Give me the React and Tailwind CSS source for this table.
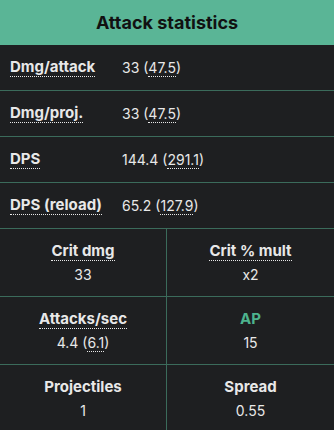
const rows = [
  { label: 'Dmg/attack', base: '33', boosted: '47.5' },
  { label: 'Dmg/proj.', base: '33', boosted: '47.5' },
  { label: 'DPS', base: '144.4', boosted: '291.1' },
  { label: 'DPS (reload)', base: '65.2', boosted: '127.9' },
];

const cells = [
  { label: 'Crit dmg', value: '33', tip: true },
  { label: 'Crit % mult', value: 'x2', tip: true },
  { label: 'Attacks/sec', value: '4.4', boosted: '6.1', tip: true },
  { label: 'AP', value: '15', green: true },
  { label: 'Projectiles', value: '1' },
  { label: 'Spread', value: '0.55' },
];

function Value({ base, boosted }) {
  return (
    <span>
      {base}
      {boosted && (
        <>
          {' ('}
          <span className="border-b border-dotted border-[#e8e8e8]">{boosted}</span>
          {')'}
        </>
      )}
    </span>
  );
}

export default function App() {
  return (
    <div
      className="w-[334px] h-[430px] overflow-hidden bg-[#1e1f21] text-[#e8e8e8]"
      style={{ fontFamily: 'Inter, "Noto Sans", sans-serif' }}
    >
      <div className="h-[45px] bg-[#5ab596] flex items-center justify-center">
        <h2 className="text-[18px] font-bold text-[#111]">Attack statistics</h2>
      </div>

      {rows.map((r) => (
        <div key={r.label} className="h-[46px] flex items-center px-[10px] border-b border-[#3b6b5b] text-[14px]">
          <span className="w-[112px] font-bold text-[15px]">
            <span className="border-b border-dotted border-[#e8e8e8]">{r.label}</span>
          </span>
          <Value base={r.base} boosted={r.boosted} />
        </div>
      ))}

      <div className="grid grid-cols-2">
        {cells.map((c, i) => (
          <div
            key={c.label}
            className={`h-[68px] flex flex-col items-center justify-center gap-[2px] text-[14px] border-b border-[#3b6b5b] ${i % 2 === 0 ? 'border-r' : ''}`}
          >
            <span className={`font-bold text-[15px] ${c.green ? 'text-[#4db38e]' : ''}`}>
              <span className={c.tip ? 'border-b border-dotted border-[#e8e8e8]' : ''}>{c.label}</span>
            </span>
            <Value base={c.value} boosted={c.boosted} />
          </div>
        ))}
      </div>
    </div>
  );
}
